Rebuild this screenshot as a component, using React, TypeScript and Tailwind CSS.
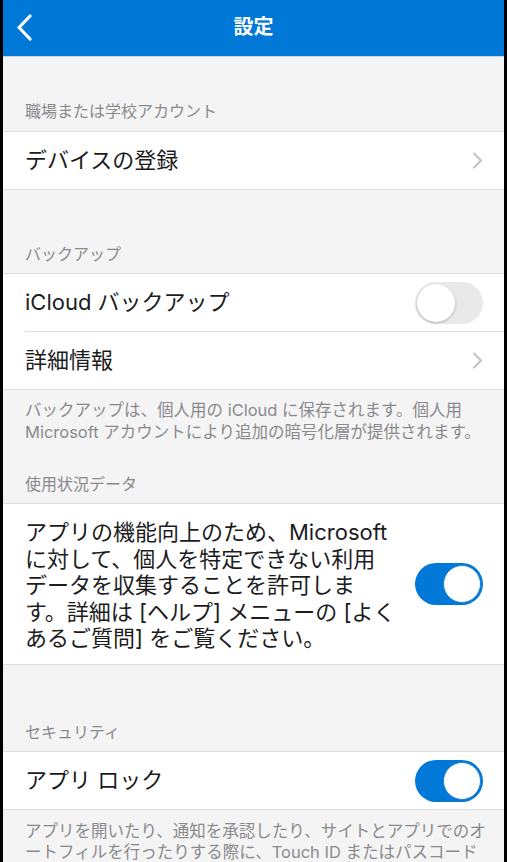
import React from 'react';

const font = { fontFamily: 'Inter, "Noto Sans CJK JP", sans-serif' };

function Chevron() {
  return (
    <svg width="11" height="17" viewBox="0 0 11 17" className="shrink-0">
      <polyline points="2,1.5 9,8.5 2,15.5" fill="none" stroke="#c4c4c8" strokeWidth="2.2" strokeLinecap="round" strokeLinejoin="round" />
    </svg>
  );
}

function Toggle({ on }: { on: boolean }) {
  if (on) {
    return (
      <div className="w-[68px] h-[42px] rounded-full bg-[#0078d7] flex items-center justify-end pr-[2px] shrink-0">
        <div className="w-[38px] h-[38px] rounded-full bg-white border border-[#1a84dc]" />
      </div>
    );
  }
  return (
    <div className="w-[68px] h-[42px] rounded-full bg-[#e9e9ea] flex items-center pl-[2px] shrink-0">
      <div className="w-[38px] h-[38px] rounded-full bg-white shadow-[0_1px_3px_rgba(0,0,0,0.25)]" />
    </div>
  );
}

function SectionHeader({ title, h }: { title: string; h: string }) {
  return (
    <div className={`${h} flex items-end pl-[22px] pb-[8px] text-[16px] leading-[22px] text-[#8a8a8e]`}>
      {title}
    </div>
  );
}

function Row({ children }: { children: React.ReactNode }) {
  return (
    <div className="h-[57px] flex items-center justify-between pl-[22px] pr-[21px] text-[22px] text-[#1c1c1e]">
      {children}
    </div>
  );
}

export default function App() {
  return (
    <div className="w-[507px] h-[862px] overflow-hidden bg-black px-[3px]" style={font}>
      <div className="h-full bg-[#f4f4f4]">
        <div className="h-[57px] bg-[#0078d7] border-b border-[#c7d5e2] relative flex items-center justify-center">
          <svg width="16" height="27" viewBox="0 0 16 27" className="absolute left-[13px] top-[14px]">
            <polyline points="14,2 3,13.5 14,25" fill="none" stroke="white" strokeWidth="3.2" strokeLinecap="round" strokeLinejoin="round" />
          </svg>
          <span className="text-white text-[20px] font-bold -mt-[2px]">設定</span>
        </div>

        <div className="h-[74px] flex items-end pl-[22px] pb-[9px] text-[16px] leading-[22px] text-[#8a8a8e]">
          職場または学校アカウント
        </div>
        <div className="bg-white border-y border-[#dedede]">
          <Row>
            <span>デバイスの登録</span>
            <Chevron />
          </Row>
        </div>

        <div className="h-[83px] flex items-end pl-[22px] pb-[8px] text-[16px] leading-[22px] text-[#8a8a8e]">
          バックアップ
        </div>
        <div className="bg-white border-y border-[#dedede]">
          <Row>
            <span>iCloud バックアップ</span>
            <Toggle on={false} />
          </Row>
          <div className="ml-[22px] border-t border-[#dedede]" />
          <Row>
            <span>詳細情報</span>
            <Chevron />
          </Row>
        </div>
        <div className="pt-[10px] pl-[22px] text-[16.5px] leading-[21.5px] text-[#8a8a8e] whitespace-nowrap">
          <div>バックアップは、個人用の iCloud に保存されます。個人用</div>
          <div>Microsoft アカウントにより追加の暗号化層が提供されます。</div>
        </div>

        <SectionHeader title="使用状況データ" h="h-[60px]" />
        <div className="bg-white border-y border-[#dedede]">
          <div className="h-[160px] flex items-center justify-between pl-[22px] pr-[21px] text-[22px] text-[#1c1c1e]">
            <div className="leading-[26.5px] whitespace-nowrap pt-[3px]">
              <div>アプリの機能向上のため、Microsoft</div>
              <div>に対して、個人を特定できない利用</div>
              <div>データを収集することを許可しま</div>
              <div>す。詳細は [ヘルプ] メニューの [よく</div>
              <div>あるご質問] をご覧ください。</div>
            </div>
            <Toggle on={true} />
          </div>
        </div>

        <SectionHeader title="セキュリティ" h="h-[86px]" />
        <div className="bg-white border-y border-[#dedede]">
          <Row>
            <span>アプリ ロック</span>
            <Toggle on={true} />
          </Row>
        </div>
        <div className="pt-[11px] pl-[22px] text-[16.5px] leading-[20.5px] text-[#8a8a8e] whitespace-nowrap">
          <div>アプリを開いたり、通知を承認したり、サイトとアプリでのオ</div>
          <div>ートフィルを行ったりする際に、Touch ID またはパスコード</div>
        </div>
      </div>
    </div>
  );
}
